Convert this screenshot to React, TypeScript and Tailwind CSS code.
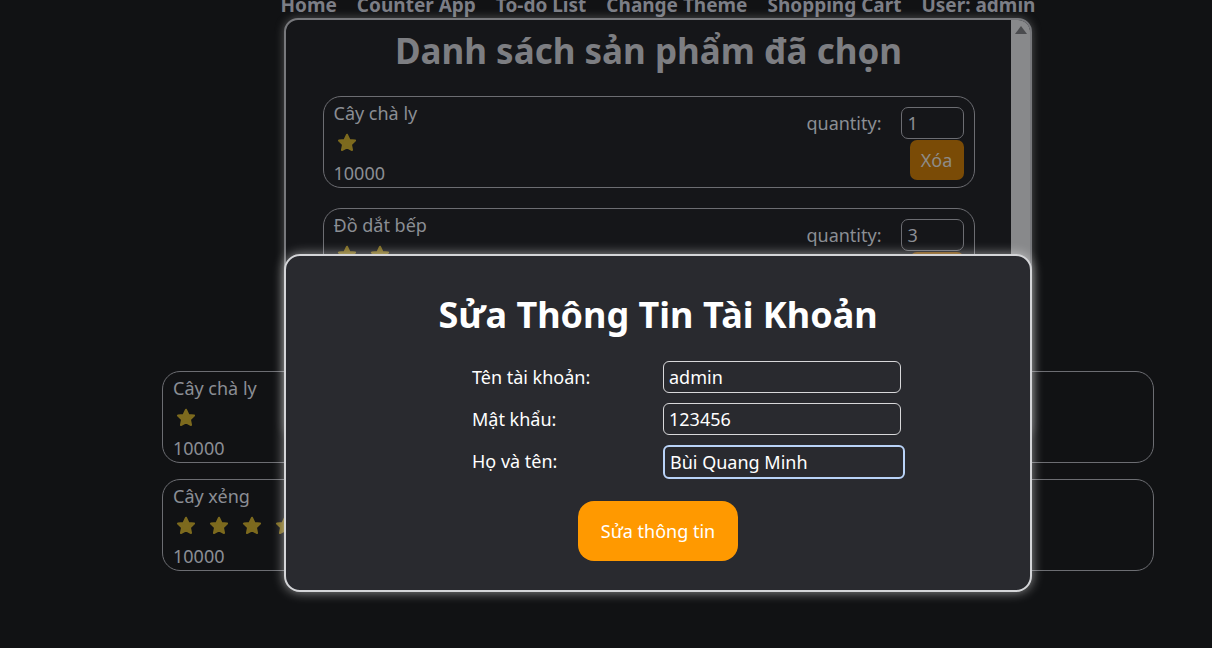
import React from 'react';

const font = { fontFamily: '"Noto Sans", "Open Sans", sans-serif' };

const Star = () => (
    <svg viewBox="0 0 24 24" className="w-[22px] h-[22px]" fill="currentColor" stroke="currentColor" strokeWidth={2.2} strokeLinejoin="round">
        <path d="M12 3l2.7 5.6 6.1.8-4.5 4.2 1.2 6.1L12 16.8l-5.5 2.9 1.2-6.1-4.5-4.2 6.1-.8z" />
    </svg>
);

const Stars = ({ count }: { count: number }) => (
    <div className="flex items-center h-[30px] gap-[11px] pl-[2px] text-[#7d6a1e]">
        {Array.from({ length: count }).map((_, i) => (
            <Star key={i} />
        ))}
    </div>
);

const navItems = ['Home', 'Counter App', 'To-do List', 'Change Theme', 'Shopping Cart', 'User: admin'];

const products = [
    { name: 'Cây chà ly', stars: 1, price: 10000 },
    { name: 'Cây xẻng', stars: 5, price: 10000 },
];

const cartItems = [
    { name: 'Cây chà ly', stars: 1, price: 10000, qty: 1 },
    { name: 'Đồ dắt bếp', stars: 2, price: 10000, qty: 3 },
];

const fields = [
    { label: 'Tên tài khoản:', value: 'admin' },
    { label: 'Mật khẩu:', value: '123456' },
    { label: 'Họ và tên:', value: 'Bùi Quang Minh', focused: true },
];

export default function App() {
    return (
        <div className="relative w-[1212px] h-[648px] overflow-hidden bg-[#111214]" style={font}>
            {/* page behind the modals, centred a bit right of the window */}
            <div className="pl-[104px] flex flex-col items-center">
                <nav className="flex gap-5 -mt-[9px] text-[19px] font-bold text-[#7c7e86]">
                    {navItems.map((n) => (
                        <span key={n}>{n}</span>
                    ))}
                </nav>
                <div className="mt-[351px] flex flex-col gap-4">
                    {products.map((p) => (
                        <div key={p.name} className="w-[992px] h-[92px] border border-[#6c6d72] rounded-[18px] px-[10px] pt-[1px] text-[18px] text-[#8b8e94] leading-[30px]">
                            <div>{p.name}</div>
                            <Stars count={p.stars} />
                            <div>{p.price}</div>
                        </div>
                    ))}
                </div>
            </div>

            {/* cart modal (dimmed) */}
            <div className="absolute left-[284px] top-[18px] w-[748px] h-[420px] rounded-[14px] border-2 border-[#77787c] bg-[#151619] shadow-[0_0_10px_rgba(200,200,200,0.35)] overflow-hidden flex">
                <div className="flex-1 flex flex-col items-center">
                    <h1 className="mt-[6px] text-[35px] font-bold text-[#7d7e82] leading-[50px]">Danh sách sản phẩm đã chọn</h1>
                    <div className="mt-[20px] flex flex-col gap-5">
                        {cartItems.map((c) => (
                            <div key={c.name} className="w-[652px] h-[92px] border border-[#6c6d72] rounded-[18px] px-[10px] pt-[1px] flex text-[18px] text-[#8b8e94] leading-[30px]">
                                <div className="flex-1">
                                    <div>{c.name}</div>
                                    <Stars count={c.stars} />
                                    <div>{c.price}</div>
                                </div>
                                <div className="flex flex-col items-end pt-[9px]">
                                    <div className="flex items-center gap-[19px]">
                                        <span>quantity:</span>
                                        <div className="w-[63px] h-[32px] border border-[#6c6d72] rounded-[7px] px-[6px] leading-[30px]">{c.qty}</div>
                                    </div>
                                    <div className="mt-[1px] w-[54px] h-[40px] rounded-[7px] bg-[#7a4b06] flex items-center justify-center text-[#8e8c88]">Xóa</div>
                                </div>
                            </div>
                        ))}
                    </div>
                </div>
                <div className="w-[19px] bg-[#88898b] flex justify-center pt-[6px]">
                    <div className="w-0 h-0 border-l-[6px] border-r-[6px] border-b-[8px] border-l-transparent border-r-transparent border-b-[#4b4c4f]" />
                </div>
            </div>

            {/* edit account modal */}
            <div className="absolute left-[284px] top-[254px] w-[748px] h-[338px] rounded-[16px] border-2 border-[#d4d5d8] bg-[#292a2f] shadow-[0_0_12px_rgba(255,255,255,0.55)] flex flex-col items-center text-white">
                <h2 className="mt-[35px] text-[36px] font-bold leading-[48px]">Sửa Thông Tin Tài Khoản</h2>
                <div className="mt-[22px] self-start ml-[186px] grid grid-cols-[191px_238px] gap-y-[10px] text-[18px]">
                    {fields.map((f) => (
                        <React.Fragment key={f.label}>
                            <div className="flex items-center h-[32px]">{f.label}</div>
                            <div
                                className={
                                    f.focused
                                        ? 'h-[34px] w-[242px] rounded-[6px] border-2 border-[#b9d3f8] px-[5px] leading-[30px]'
                                        : 'h-[32px] rounded-[6px] border border-[#d8d8da] px-[5px] leading-[30px]'
                                }
                            >
                                {f.value}
                            </div>
                        </React.Fragment>
                    ))}
                </div>
                <button className="mt-[22px] w-[160px] h-[60px] rounded-[16px] bg-[#ff9900] text-[18px] text-white">Sửa thông tin</button>
            </div>
        </div>
    );
}
